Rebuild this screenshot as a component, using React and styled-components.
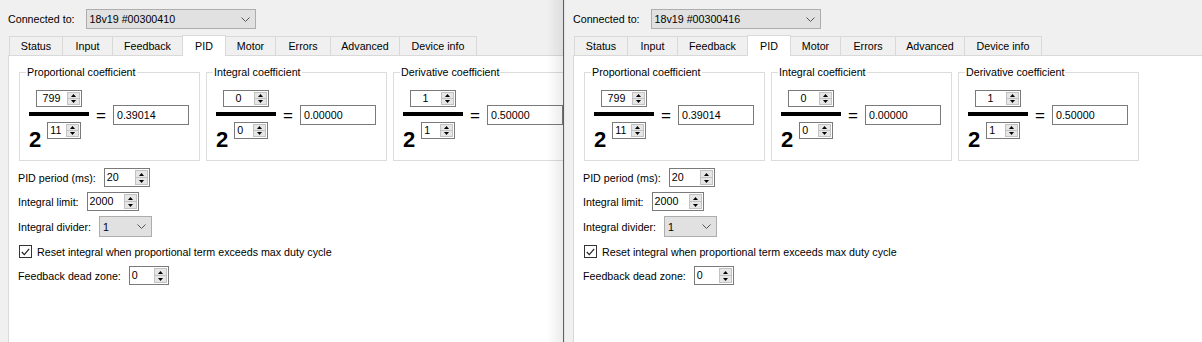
import styled, { createGlobalStyle } from "styled-components";

const GlobalStyle = createGlobalStyle`
  html, body {
    margin: 0;
    padding: 0;
    background: #f0f0f0;
  }
  body {
    font-family: "Liberation Sans", Arial, sans-serif;
    font-size: 10.7px;
    color: #000;
  }
`;

const Desktop = styled.div`
  width: 1202px;
  height: 342px;
  overflow: hidden;
  display: flex;
`;

const Clip = styled.div`
  position: relative;
  width: 563px;
  flex: none;
  overflow: hidden;
`;

const Shadow = styled.div`
  position: absolute;
  top: 0;
  right: 0;
  bottom: 0;
  width: 16px;
  background: linear-gradient(to right, rgba(0, 0, 0, 0), rgba(0, 0, 0, 0.08));
  pointer-events: none;
`;

const Edge = styled.div`
  width: 1px;
  flex: none;
  background: #5e5e5e;
`;

const Window = styled.div`
  width: ${(p) => p.$w}px;
  height: 360px;
  flex: none;
  box-sizing: border-box;
  padding: 9px 8px 0;
  border-left: ${(p) => (p.$framed ? "1px solid #e4e4e4" : "none")};
  display: flex;
  flex-direction: column;
  background: #f0f0f0;
`;

const ConnectRow = styled.div`
  display: flex;
  align-items: center;
  gap: 11px;
  height: 20px;
`;

const Combo = styled.div`
  width: ${(p) => p.$w}px;
  height: ${(p) => p.$h}px;
  box-sizing: border-box;
  border: 1px solid #adadad;
  background: #e1e1e1;
  display: flex;
  align-items: center;
  justify-content: space-between;
  padding: 0 5px 0 3px;
`;

const TabBar = styled.div`
  display: flex;
  align-items: flex-start;
  height: 20px;
  margin-top: 6px;
  padding-left: 1px;
`;

const Tab = styled.div`
  width: ${(p) => p.$w}px;
  height: ${(p) => (p.$active ? 21 : 19)}px;
  margin-top: ${(p) => (p.$active ? 0 : 1)}px;
  margin-left: -1px;
  box-sizing: border-box;
  border: 1px solid #d9d9d9;
  border-bottom: none;
  background: ${(p) => (p.$active ? "#fff" : "#f0f0f0")};
  display: flex;
  align-items: center;
  justify-content: center;
  position: ${(p) => (p.$active ? "relative" : "static")};
  z-index: ${(p) => (p.$active ? 1 : "auto")};
  &:first-child {
    margin-left: 0;
  }
`;

const Pane = styled.div`
  flex: 1;
  background: #fff;
  border: 1px solid #d9d9d9;
  padding: 16px 10px 0;
  display: flex;
  flex-direction: column;
`;

const GroupRow = styled.div`
  display: flex;
  gap: 6px;
`;

const Group = styled.div`
  position: relative;
  width: 181px;
  height: 89px;
  flex: none;
  box-sizing: border-box;
  border: 1px solid #dcdcdc;
  padding: 17px 0 0 9px;
`;

const GroupTitle = styled.div`
  position: absolute;
  top: -8px;
  left: 6px;
  padding: 0 1px;
  background: #fff;
  line-height: 14px;
  white-space: nowrap;
`;

const FracRow = styled.div`
  display: flex;
  align-items: flex-start;
`;

const Fraction = styled.div`
  width: 60px;
  display: flex;
  flex-direction: column;
  align-items: center;
`;

const Bar = styled.div`
  width: 60px;
  height: 4px;
  margin-top: 5px;
  background: #000;
`;

const Denominator = styled.div`
  align-self: stretch;
  display: flex;
  align-items: flex-start;
`;

const Base = styled.div`
  font-size: 22px;
  font-weight: bold;
  line-height: 22px;
  margin-top: 13px;
`;

const Exponent = styled.div`
  margin: 6px 0 0 6px;
`;

const Result = styled.div`
  display: flex;
  align-items: center;
  gap: 7px;
  margin: 13px 0 0 7px;
`;

const EqSign = styled.div`
  font-size: 17px;
  line-height: 20px;
  padding-top: 3px;
`;

const LineEdit = styled.div`
  width: ${(p) => p.$w}px;
  height: 20px;
  box-sizing: border-box;
  border: 1px solid #7a7a7a;
  background: #fff;
  padding-left: 3px;
  display: flex;
  align-items: center;
`;

const SpinFrame = styled.div`
  width: ${(p) => p.$w}px;
  height: ${(p) => p.$h}px;
  box-sizing: border-box;
  border: 1px solid #7a7a7a;
  background: #fff;
  display: flex;
`;

const SpinValue = styled.div`
  flex: 1;
  padding: 0 2px;
  text-align: ${(p) => p.$align};
  line-height: ${(p) => p.$h - 2}px;
`;

const SpinButtons = styled.div`
  width: 13px;
  margin: 1px;
  box-sizing: border-box;
  border: 1px solid #c2c2c2;
  background: #e6e6e6;
  display: flex;
  flex-direction: column;
`;

const SpinBtn = styled.div`
  flex: 1;
  display: flex;
  align-items: center;
  justify-content: center;
  &:first-child {
    border-bottom: 1px solid #c2c2c2;
  }
`;

const Form = styled.div`
  display: flex;
  flex-direction: column;
  gap: 5px;
  margin: 7px 0 0 -1px;
`;

const FormRow = styled.div`
  display: flex;
  align-items: center;
  gap: ${(p) => p.$gap || 8}px;
  height: ${(p) => p.$h}px;
`;

const CheckBox = styled.div`
  width: 13px;
  height: 13px;
  margin-left: 1px;
  box-sizing: border-box;
  border: 1px solid #333;
  background: #fff;
  display: flex;
  align-items: center;
  justify-content: center;
`;

const Chevron = () => (
  <svg width="9" height="5" viewBox="0 0 9 5">
    <polyline points="0.5,0.5 4.5,4.5 8.5,0.5" fill="none" stroke="#555" strokeWidth="1" />
  </svg>
);

const Arrow = ({ up }) => (
  <svg width="5" height="3" viewBox="0 0 5 3">
    <polygon points={up ? "0,3 2.5,0 5,3" : "0,0 5,0 2.5,3"} fill="#000" />
  </svg>
);

const Spin = ({ value, w, h = 17, align = "left" }) => (
  <SpinFrame $w={w} $h={h}>
    <SpinValue $align={align} $h={h}>
      {value}
    </SpinValue>
    <SpinButtons>
      <SpinBtn>
        <Arrow up />
      </SpinBtn>
      <SpinBtn>
        <Arrow />
      </SpinBtn>
    </SpinButtons>
  </SpinFrame>
);

const tabs = [
  ["Status", 54],
  ["Input", 51],
  ["Feedback", 71],
  ["PID", 44],
  ["Motor", 51],
  ["Errors", 56],
  ["Advanced", 70],
  ["Device info", 78],
];

const coefficients = [
  { title: "Proportional coefficient", num: "799", exp: "11", value: "0.39014" },
  { title: "Integral coefficient", num: "0", exp: "0", value: "0.00000" },
  { title: "Derivative coefficient", num: "1", exp: "1", value: "0.50000" },
];

const Coefficient = ({ title, num, exp, value }) => (
  <Group>
    <GroupTitle>{title}</GroupTitle>
    <FracRow>
      <Fraction>
        <Spin value={num} w={46} align="center" />
        <Bar />
        <Denominator>
          <Base>2</Base>
          <Exponent>
            <Spin value={exp} w={34} />
          </Exponent>
        </Denominator>
      </Fraction>
      <Result>
        <EqSign>=</EqSign>
        <LineEdit $w={76}>{value}</LineEdit>
      </Result>
    </FracRow>
  </Group>
);

const Controller = ({ device, width, framed }) => (
  <Window $w={width} $framed={framed}>
    <ConnectRow>
      <span>Connected to:</span>
      <Combo $w={170} $h={20}>
        <span>{device}</span>
        <Chevron />
      </Combo>
    </ConnectRow>
    <TabBar>
      {tabs.map(([name, w]) => (
        <Tab key={name} $w={w} $active={name === "PID"}>
          {name}
        </Tab>
      ))}
    </TabBar>
    <Pane>
      <GroupRow>
        {coefficients.map((c) => (
          <Coefficient key={c.title} {...c} />
        ))}
      </GroupRow>
      <Form>
        <FormRow $h={19}>
          <span>PID period (ms):</span>
          <Spin value="20" w={46} h={19} />
        </FormRow>
        <FormRow $h={19}>
          <span>Integral limit:</span>
          <Spin value="2000" w={52} h={19} />
        </FormRow>
        <FormRow $h={21}>
          <span>Integral divider:</span>
          <Combo $w={53} $h={21}>
            <span>1</span>
            <Chevron />
          </Combo>
        </FormRow>
        <FormRow $h={19} $gap={5}>
          <CheckBox>
            <svg width="9" height="8" viewBox="0 0 9 8">
              <polyline points="0.8,4 3.3,6.6 8.2,0.8" fill="none" stroke="#222" strokeWidth="1.2" />
            </svg>
          </CheckBox>
          <span>Reset integral when proportional term exceeds max duty cycle</span>
        </FormRow>
        <FormRow $h={19}>
          <span>Feedback dead zone:</span>
          <Spin value="0" w={40} h={19} />
        </FormRow>
      </Form>
    </Pane>
  </Window>
);

const App = () => (
  <>
    <GlobalStyle />
    <Desktop>
      <Clip>
        <Controller device="18v19 #00300410" width={640} />
        <Shadow />
      </Clip>
      <Edge />
      <Controller device="18v19 #00300416" width={700} framed />
    </Desktop>
  </>
);

export default App;
